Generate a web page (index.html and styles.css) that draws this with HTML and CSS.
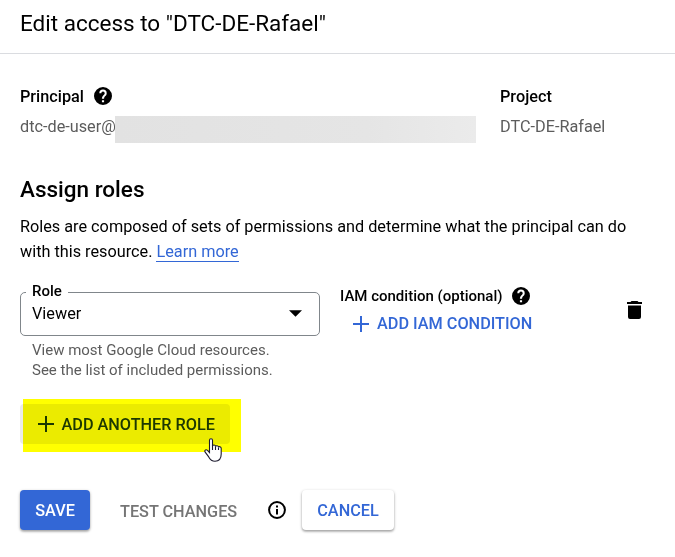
FILE: index.html
```html
<!DOCTYPE html>
<html lang="en">
<head>
<meta charset="utf-8">
<title>Edit access</title>
<link rel="stylesheet" href="styles.css">
</head>
<body>
<svg class="defs" aria-hidden="true">
  <symbol id="help" viewBox="2 2 20 20"><path d="M12 2a10 10 0 1 0 0 20 10 10 0 0 0 0-20zm1.200 17h-2.400v-2.400h2.400V19zm2.300-7.900-.9.9c-.9.9-1.400 1.600-1.400 3h-2.400v-.5c0-1.100.4-2.100 1.200-2.900l1.300-1.300c.4-.3.6-.8.6-1.300a1.900 1.900 0 0 0-3.800 0H7.900a4.100 4.100 0 0 1 8.200 0c0 .8-.2 1.500-.6 2.100z"/></symbol>
  <symbol id="plus" viewBox="0 0 16 16"><path d="M7 0h2v7h7v2H9v7H7V9H0V7h7z"/></symbol>
</svg>
<header class="header"><h1 class="title">Edit access to "DTC-DE-Rafael"</h1></header>
<main class="content">
  <section class="identity">
    <div class="principal">
      <div class="label"><span class="label-text">Principal</span><svg class="help"><use href="#help"/></svg></div>
      <div class="value"><span class="account">dtc-de-user@</span><i class="redacted"></i></div>
    </div>
    <div class="project">
      <div class="label"><span class="label-text">Project</span></div>
      <div class="value">DTC-DE-Rafael</div>
    </div>
  </section>
  <h2 class="heading">Assign roles</h2>
  <p class="intro">Roles are composed of sets of permissions and determine what the principal can do<br>with this resource. <a class="link">Learn more</a></p>
  <section class="role-row">
    <div class="role">
      <div class="select">
        <span class="select-label">Role</span>
        <span class="select-value">Viewer</span>
        <svg class="arrow" viewBox="0 0 12 6"><path d="M0 0h12L6 6z"/></svg>
      </div>
      <div class="hint">View most Google Cloud resources.<br>See the list of included permissions.</div>
    </div>
    <div class="condition">
      <div class="condition-label"><span>IAM condition (optional)</span><svg class="help"><use href="#help"/></svg></div>
      <div class="add-condition"><svg class="plus"><use href="#plus"/></svg><span>ADD IAM CONDITION</span></div>
    </div>
    <svg class="trash" viewBox="0 0 15 18"><path d="M4.500 0h6l1 1H15v2H0V1h3.500zM1 4.500h13V16a2 2 0 0 1-2 2H3a2 2 0 0 1-2-2z"/></svg>
  </section>
  <div class="add-role">
    <div class="add-role-button"><svg class="plus"><use href="#plus"/></svg><span class="label-text">ADD ANOTHER ROLE</span></div>
    <i class="highlight"></i>
    <svg class="cursor" viewBox="0 0 18 24"><path d="M5.500 14.500V2.200C5.500.2 8.500.2 8.500 2.200V8c.4-1.500 3-1.300 3 .5.500-1.200 3-.9 3 .7.500-1 2.700-.6 2.700 1.300v5.500c0 4-2 7.200-6.200 7.200-3.500 0-5-1.800-6.300-4.300L1 13.900c-.8-1.800 1.200-2.800 2.500-1.500z" fill="#fff" stroke="#1c1a2e" stroke-width="1.100"/><path d="M8.500 7.500V12M11.500 8.500V12M14.500 9.500V12" fill="none" stroke="#1c1a2e" stroke-width="1.100"/></svg>
  </div>
  <footer class="actions">
    <div class="button save">SAVE</div>
    <div class="test">TEST CHANGES</div>
    <svg class="info" viewBox="0 0 18 18"><circle cx="9" cy="9" r="7.900" fill="none" stroke="#000" stroke-width="2"/><path d="M8 4.500h2v2H8zM8 8h2v5.500H8z"/></svg>
    <div class="button cancel">CANCEL</div>
  </footer>
</main>
</body>
</html>
```

FILE: styles.css
```css
* { box-sizing: border-box; }
body { margin: 0; min-height: 100vh; background: #fff; color: #000; font: 16.25px/20px Roboto, sans-serif; white-space: nowrap; }
h1, h2, p { margin: 0; }
svg { display: block; flex: none; }
.defs { position: absolute; width: 0; height: 0; }
.header { height: 54px; padding: 8px 20px 0; border-bottom: 1px solid #dadce0; }
.title { font-size: 22.5px; line-height: 30px; font-weight: 400; }
.content { padding: 32px 20px 0; }
.identity { display: flex; height: 91px; }
.principal { width: 480px; }
.label { display: flex; align-items: center; height: 20px; font-weight: 500; gap: 10px; }
.label-text { padding-top: 2px; }
.help { width: 18px; height: 18px; }
.value { display: flex; height: 28px; margin-top: 10px; line-height: 21px; color: #5c5c5c; }
.account { width: 95px; }
.redacted { width: 361px; height: 27px; background: linear-gradient(90deg, #e2e2e2, #e5e5e5 70%, #ebebeb); }
.heading { font-size: 22.5px; line-height: 24px; font-weight: 500; }
.intro { height: 50px; margin-top: 13px; line-height: 25px; }
.link { color: #3367d6; border-bottom: 1px solid #3367d6; }
.role-row { display: flex; height: 108px; margin-top: 28px; }
.role { width: 300px; }
.select { position: relative; display: flex; justify-content: space-between; width: 300px; height: 44px; border: 1px solid #80868b; border-radius: 5px; padding: 11px 17px 0 11px; }
.select-label { position: absolute; left: 5px; top: -12px; padding: 0 6px; background: #fff; font-size: 15px; font-weight: 500; }
.arrow { width: 13px; height: 7px; margin-top: 6px; }
.hint { padding: 4px 12px; font-size: 15px; color: #5c5c5c; }
.condition { width: 307px; padding-left: 20px; margin-top: -6px; }
.condition-label { display: flex; align-items: center; gap: 9px; font-size: 15px; font-weight: 500; }
.add-condition { display: flex; align-items: center; gap: 8px; padding: 8px 0 0 13px; font-weight: 500; color: #3367d6; }
.plus { width: 16px; height: 16px; fill: currentColor; }
.trash { width: 15px; height: 18px; margin-top: 9px; }
.add-role { position: relative; height: 40px; margin-top: 4px; }
.add-role-button { display: flex; align-items: center; gap: 7.5px; width: 210px; height: 40px; padding-left: 18px; border-radius: 4px; background: #ebebeb; color: #1c3860; font-weight: 500; }
.highlight { position: absolute; left: 3px; top: -5px; width: 218px; height: 53px; background: #ff0; mix-blend-mode: multiply; }
.cursor { position: absolute; left: 184px; top: 34px; width: 18px; height: 24px; }
.actions { display: flex; align-items: center; height: 40px; margin-top: 46px; font-weight: 500; }
.button { display: flex; align-items: center; justify-content: center; height: 40px; padding-top: 2px; border-radius: 4px; box-shadow: 0 1px 3px rgba(0,0,0,.3), 0 2px 2px rgba(0,0,0,.15); }
.save { width: 70px; background: #3367d6; color: #fff; }
.test { width: 178px; padding: 3px 0 0 30px; color: #757575; }
.info { width: 18px; height: 18px; margin-right: 16px; }
.cancel { width: 92px; color: #3367d6; }
```
